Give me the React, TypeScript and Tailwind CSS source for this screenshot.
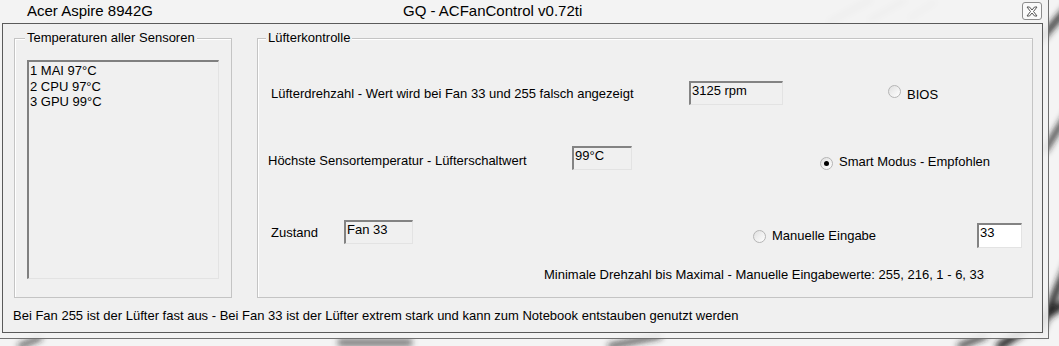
import React from "react";

const sensors = ["1 MAI 97°C", "2 CPU 97°C", "3 GPU 99°C"];

function Radio({ checked }: { checked?: boolean }) {
    return (
        <span className="relative inline-flex h-[13px] w-[13px] shrink-0 items-center justify-center rounded-full border border-[#b5b5b5] bg-gradient-to-br from-[#e0e0e0] to-white">
            {checked && <span className="h-[5px] w-[5px] rounded-full bg-black" />}
        </span>
    );
}

function Box({ value, className, white }: { value: string; className: string; white?: boolean }) {
    return (
        <div
            className={`${className} h-[24px] shrink-0 border-t-2 border-l-2 border-b border-r border-t-[#838383] border-l-[#838383] border-b-[#e3e3e3] border-r-[#e3e3e3] pl-[1px] leading-[15px] ${white ? "bg-white" : "bg-[#f0f0f0]"}`}
        >
            {value}
        </div>
    );
}

function Backdrop() {
    return (
        <svg className="absolute inset-0" width="1059" height="346" viewBox="0 0 1059 346">
            <defs>
                <filter id="blur" x="-20%" y="-20%" width="140%" height="140%">
                    <feGaussianBlur stdDeviation="3" />
                </filter>
            </defs>
            <rect width="1059" height="346" fill="#f4f4f4" />
            <g stroke="#222" strokeLinecap="round" fill="none" filter="url(#blur)">
                <path d="M1040 40 L1070 5" strokeWidth="6" />
                <path d="M1045 150 L1070 110" strokeWidth="5" />
                <path d="M1040 330 L1070 260" strokeWidth="7" />
                <path d="M1000 346 L1070 300" strokeWidth="8" />
                <path d="M960 346 L985 336" strokeWidth="5" />
                <path d="M20 346 L40 338" strokeWidth="4" />
                <path d="M610 346 L660 336" strokeWidth="4" />
            </g>
            <g stroke="#9a9a9a" strokeLinecap="round" fill="none" filter="url(#blur)" opacity="0.6">
                <path d="M830 22 L870 0" strokeWidth="6" />
                <path d="M870 20 L905 0" strokeWidth="5" />
                <path d="M910 18 L935 2" strokeWidth="4" />
                <path d="M50 22 L100 20" strokeWidth="4" />
            </g>
            <rect x="338" y="339" width="74" height="7" fill="#3a3a3a" filter="url(#blur)" opacity="0.7" />
        </svg>
    );
}

export default function App() {
    return (
        <div
            className="relative h-[346px] w-[1059px] overflow-hidden text-[13px] text-black"
            style={{ fontFamily: '"Liberation Sans", Arial, sans-serif' }}
        >
            <Backdrop />

            {/* window */}
            <div className="relative flex h-[339px] w-[1049px] flex-col border-r border-b border-[#707070] bg-[#f3f3f3]/90">
                {/* title bar */}
                <div className="relative flex h-[23px] items-center pl-[27px] text-[15px]">
                    <span className="w-[376px]">Acer Aspire 8942G</span>
                    <span>GQ - ACFanControl v0.72ti</span>
                    <div className="absolute top-[2px] left-[1022px] flex h-[18px] w-[20px] items-center justify-center rounded-[3px] border border-[#8c8c8c] bg-white/60">
                        <svg width="12" height="11" viewBox="0 0 12 11">
                            <path
                                d="M1 1 H3.5 L6 4 L8.5 1 H11 L7.5 5.5 L11 10 H8.5 L6 7 L3.5 10 H1 L4.5 5.5 Z"
                                fill="#fff"
                                stroke="#555"
                                strokeWidth="1"
                                strokeLinejoin="round"
                            />
                        </svg>
                    </div>
                </div>

                {/* client area */}
                <div className="ml-[2px] flex h-[310px] w-[1041px] flex-col border border-[#5a5a5a] bg-[#f0f0f0]">
                    <div className="mt-[14px] flex pl-[11px]">
                        {/* sensors group */}
                        <div className="relative h-[260px] w-[218px] border border-[#c4c4c4] shadow-[inset_1px_1px_0_#fff]">
                            <span className="absolute -top-[9px] left-[10px] bg-[#f0f0f0] px-[2px] leading-[16px]">
                                Temperaturen aller Sensoren
                            </span>
                            <div className="mt-[21px] ml-[12px] h-[219px] w-[192px] border-t-2 border-l-2 border-b border-r border-t-[#808080] border-l-[#808080] border-b-[#e3e3e3] border-r-[#e3e3e3] pt-[1px] pl-[1px] leading-[15.5px]">
                                {sensors.map((s) => (
                                    <div key={s}>{s}</div>
                                ))}
                            </div>
                        </div>

                        {/* fan control group */}
                        <div className="relative ml-[25px] flex h-[260px] w-[776px] flex-col border border-[#c4c4c4] shadow-[inset_1px_1px_0_#fff]">
                            <span className="absolute -top-[9px] left-[8px] bg-[#f0f0f0] px-[2px] leading-[16px]">
                                Lüfterkontrolle
                            </span>

                            <div className="mt-[42px] flex items-center">
                                <span className="ml-[13px] w-[418px] pt-[2px]">
                                    Lüfterdrehzahl - Wert wird bei Fan 33 und 255 falsch angezeigt
                                </span>
                                <Box value="3125 rpm" className="w-[94px]" />
                                <span className="ml-[105px] pt-[2px]">
                                    <Radio />
                                </span>
                                <span className="ml-[6px] pt-[3px]">BIOS</span>
                            </div>
                            <div className="mt-[40px] flex items-center">
                                <span className="ml-[10px] w-[304px] pt-[4px]">
                                    Höchste Sensortemperatur - Lüfterschaltwert
                                </span>
                                <Box value="99°C" className="w-[60px]" />
                                <span className="ml-[188px] pt-[6px]">
                                    <Radio checked />
                                </span>
                                <span className="ml-[6px] pt-[7px]">Smart Modus - Empfohlen</span>
                            </div>
                            <div className="mt-[48px] flex items-start">
                                <span className="ml-[13px] w-[73px] pt-[3px]">Zustand</span>
                                <Box value="Fan 33" className="w-[69px]" />
                                <span className="mt-[9px] ml-[340px]">
                                    <Radio />
                                </span>
                                <span className="mt-[6px] ml-[6px] w-[205px]">Manuelle Eingabe</span>
                                <Box value="33" className="mt-[3px] h-[25px] w-[45px]" white />
                            </div>
                            <div className="mt-[17px] ml-[286px]">
                                Minimale Drehzahl bis Maximal - Manuelle Eingabewerte: 255, 216, 1 - 6, 33
                            </div>
                        </div>
                    </div>

                    <div className="mt-[8px] ml-[10px]">
                        Bei Fan 255 ist der Lüfter fast aus - Bei Fan 33 ist der Lüfter extrem stark und kann zum Notebook
                        entstauben genutzt werden
                    </div>
                </div>
            </div>
        </div>
    );
}
